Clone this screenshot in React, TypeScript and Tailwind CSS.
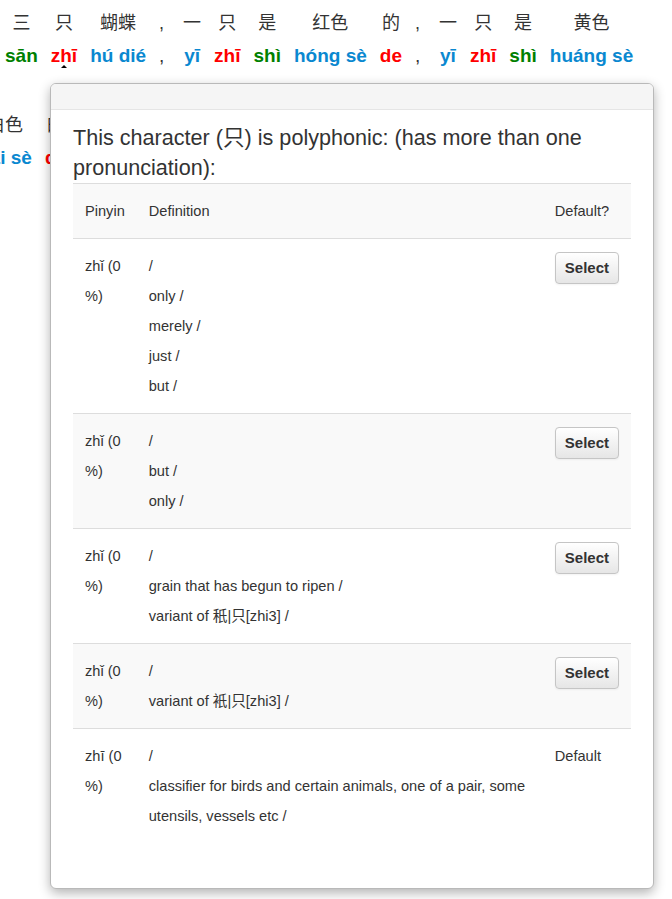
import React from "react";

type Word = { hz: string; py: string; color: string; caret?: boolean; comma?: boolean };

const RED = "text-[#ff0000]";
const GREEN = "text-[#008000]";
const BLUE = "text-[#0a88d0]";

const lineOne: Word[] = [
  { hz: "三", py: "sān", color: GREEN },
  { hz: "只", py: "zhī", color: RED, caret: true },
  { hz: "蝴蝶", py: "hú dié", color: BLUE },
  { hz: ",", py: ",", color: "", comma: true },
  { hz: "一", py: "yī", color: BLUE },
  { hz: "只", py: "zhī", color: RED },
  { hz: "是", py: "shì", color: GREEN },
  { hz: "红色", py: "hóng sè", color: BLUE },
  { hz: "的", py: "de", color: RED },
  { hz: ",", py: ",", color: "", comma: true },
  { hz: "一", py: "yī", color: BLUE },
  { hz: "只", py: "zhī", color: RED },
  { hz: "是", py: "shì", color: GREEN },
  { hz: "黄色", py: "huáng sè", color: BLUE },
];

const lineTwo: Word[] = [
  { hz: "白色", py: "bái sè", color: BLUE },
  { hz: "的", py: "de", color: RED },
  { hz: "。", py: ".", color: "", comma: true },
];

const WordUnit: React.FC<{ w: Word }> = ({ w }) => {
  if (w.comma) {
    return (
      <div className="flex flex-col w-[11px] text-[#333]">
        <div className="h-[30px] leading-[30px] text-[18px]">{w.hz}</div>
        <div className="mt-[3px] leading-[30px] text-[19px]">{w.py}</div>
      </div>
    );
  }
  return (
    <div className="relative flex flex-col items-center">
      <div className="h-[30px] leading-[30px] text-[18px] text-[#333] whitespace-nowrap">
        {w.hz}
      </div>
      <div className={`mt-[3px] leading-[30px] text-[19px] font-bold whitespace-nowrap ${w.color}`}>
        {w.py}
      </div>
      {w.caret && (
        <div className="absolute left-1/2 -translate-x-1/2 bottom-[3px] w-0 h-0 border-l-[3px] border-r-[3px] border-b-[3px] border-l-transparent border-r-transparent border-b-black" />
      )}
    </div>
  );
};

type Entry = { py: string; defs: string[]; selected?: boolean };

const entries: Entry[] = [
  { py: "zhǐ", defs: ["/", "only /", "merely /", "just /", "but /"] },
  { py: "zhǐ", defs: ["/", "but /", "only /"] },
  { py: "zhǐ", defs: ["/", "grain that has begun to ripen /", "variant of 秖|只[zhi3] /"] },
  { py: "zhǐ", defs: ["/", "variant of 衹|只[zhi3] /"] },
  {
    py: "zhī",
    defs: [
      "/",
      "classifier for birds and certain animals, one of a pair, some utensils, vessels etc /",
    ],
    selected: true,
  },
];

const SelectButton = () => (
  <button className="h-[32px] px-[9px] mt-px rounded-[4px] border border-[#c5c5c5] bg-gradient-to-b from-white to-[#e6e6e6] text-[15px] font-bold text-[#333] leading-[30px] shadow-[inset_0_1px_0_rgba(255,255,255,0.2),0_1px_2px_rgba(0,0,0,0.05)]">
    Select
  </button>
);

export default function App() {
  return (
    <div
      className="relative w-[672px] h-[899px] bg-white overflow-hidden"
      style={{ fontFamily: '"Liberation Sans", "Noto Sans CJK SC", Arial, sans-serif' }}
    >
      <div className="pt-[8px]">
        <div className="flex gap-x-[13px] pl-[5px]">
          {lineOne.map((w, i) => (
            <WordUnit key={i} w={w} />
          ))}
        </div>
        <div className="flex gap-x-[13px] ml-[-22px] mt-[39px]">
          {lineTwo.map((w, i) => (
            <WordUnit key={i} w={w} />
          ))}
        </div>
      </div>

      <div className="absolute left-[50px] top-[83px] w-[604px] h-[806px] bg-white border border-[#b9b9b9] rounded-[6px] shadow-[0_4px_12px_rgba(0,0,0,0.3)] overflow-hidden">
        <div className="h-[26px] bg-[#f5f5f5] border-b border-[#e5e5e5]" />
        <div className="px-[22px] pt-[13px] text-[#333]">
          <h3 className="text-[21.6px] leading-[30px] font-normal">
            This character (只) is polyphonic: (has more than one pronunciation):
          </h3>
          <table className="w-full border-collapse text-[14.6px] leading-[30px]">
            <thead>
              <tr className="bg-[#f9f9f9] border-t border-[#dddddd]">
                <th className="w-[63px] px-[12px] py-[12px] text-left font-normal align-top">Pinyin</th>
                <th className="px-[12px] py-[12px] text-left font-normal align-top">Definition</th>
                <th className="w-[84px] px-[12px] py-[12px] text-left font-normal align-top">Default?</th>
              </tr>
            </thead>
            <tbody>
              {entries.map((e, i) => (
                <tr
                  key={i}
                  className={`border-t border-[#dddddd] ${i % 2 === 1 ? "bg-[#f9f9f9]" : "bg-white"}`}
                >
                  <td className="px-[12px] py-[12px] align-top whitespace-nowrap">
                    {e.py} (0
                    <br />
                    %)
                  </td>
                  <td className="px-[12px] py-[12px] align-top">
                    {e.defs.map((d, j) => (
                      <div key={j}>{d}</div>
                    ))}
                  </td>
                  <td className="px-[12px] py-[12px] align-top">
                    {e.selected ? "Default" : <SelectButton />}
                  </td>
                </tr>
              ))}
            </tbody>
          </table>
        </div>
      </div>
    </div>
  );
}
